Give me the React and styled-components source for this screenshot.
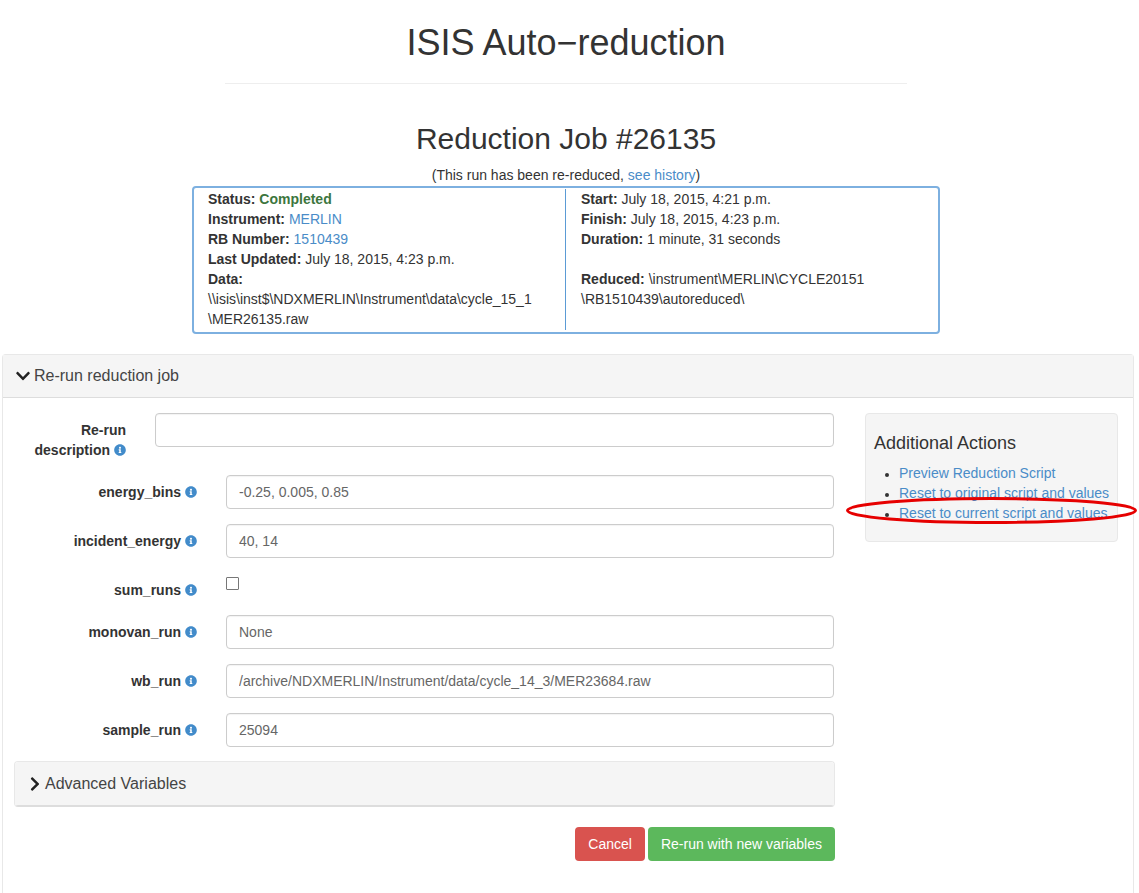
import React from "react";
import styled, { createGlobalStyle } from "styled-components";
import { FaChevronDown, FaChevronRight, FaInfoCircle } from "react-icons/fa";

const Global = createGlobalStyle`
    html, body {
        margin: 0;
        background: #fff;
        font-family: "Liberation Sans", Arial, sans-serif;
        font-size: 14px;
        line-height: 20px;
        color: #333;
    }
`;

const Page = styled.div`
    width: 1139px;
    height: 893px;
    overflow: hidden;
`;

const Header = styled.header`
    width: 682px;
    height: 83px;
    margin-left: 225px;
    border-bottom: 1px solid #eee;
    display: flex;
    justify-content: center;
`;

const Title = styled.h1`
    margin: 22px 0 0;
    font-size: 36px;
    line-height: 42px;
    font-weight: 400;
`;

const JobTitle = styled.h2`
    width: 1132px;
    margin: 38px 0 0;
    text-align: center;
    font-size: 30px;
    line-height: 34px;
    font-weight: 400;
`;

const Note = styled.p`
    width: 1132px;
    margin: 9px 0 1px;
    text-align: center;
`;

const Link = styled.a`
    color: #4a8cc8;
    text-decoration: none;
`;

const Summary = styled.section`
    box-sizing: border-box;
    width: 748px;
    height: 148px;
    margin-left: 192px;
    padding: 1px 0 2px;
    display: flex;
    border: 2px solid #7db0e0;
    border-radius: 4px;
`;

const SummaryCol = styled.div`
    box-sizing: border-box;
    width: ${(p) => p.$width}px;
    padding-left: ${(p) => p.$pad}px;
    border-right: ${(p) => (p.$divider ? "1px solid #5b9bd5" : "none")};
`;

const Line = styled.div`
    height: 20px;
    white-space: nowrap;
`;

const Done = styled.span`
    color: #3c763d;
    font-weight: 700;
`;

const Panel = styled.section`
    box-sizing: border-box;
    width: 1132px;
    height: 540px;
    margin: 20px 0 0 2px;
    border: 1px solid #e8e8e8;
    border-bottom: none;
    border-radius: 4px 4px 0 0;
`;

const PanelHeading = styled.div`
    box-sizing: border-box;
    height: ${(p) => p.$height}px;
    padding: 0 12px;
    display: flex;
    align-items: center;
    gap: ${(p) => p.$gap}px;
    background: #f5f5f5;
    border-bottom: 1px solid #ddd;
    font-size: 16px;
    color: #444;

    svg {
        color: #222;
        font-size: 16px;
    }
`;

const PanelBody = styled.div`
    display: flex;
    padding: 15px 15px 0 11px;
`;

const FormCol = styled.form`
    width: 821px;
    margin-right: 30px;
`;

const Row = styled.div`
    display: grid;
    grid-template-columns: ${(p) => p.$label}px 1fr;
    column-gap: 29px;
    margin-bottom: 15px;
`;

const Label = styled.label`
    padding-top: 7px;
    text-align: right;
    font-weight: 700;
`;

const Info = styled(FaInfoCircle)`
    margin-left: 4px;
    vertical-align: -1px;
    font-size: 12px;
    color: #428bca;
`;

const Input = styled.input`
    box-sizing: border-box;
    width: 100%;
    height: 34px;
    padding: 6px 12px;
    border: 1px solid #ccc;
    border-radius: 4px;
    background: #fff;
    font: inherit;
    color: #666;
    box-shadow: inset 0 1px 1px rgba(0, 0, 0, 0.05);
`;

const Check = styled.input`
    width: 13px;
    height: 13px;
    margin: 4px 0 0;
    appearance: none;
    border: 1px solid #777;
    border-radius: 1px;
    background: #fff;
`;

const Advanced = styled.div`
    margin: -1px -1px 0 0;
    border: 1px solid #e8e8e8;
    border-bottom: 1px solid #ddd;
    border-radius: 4px;
    overflow: hidden;
`;

const Buttons = styled.div`
    display: flex;
    justify-content: flex-end;
    gap: 3px;
    margin: 20px -1px 0 0;
`;

const Button = styled.button`
    height: 34px;
    padding: 0 13px;
    border: none;
    border-radius: 4px;
    background: ${(p) => p.$bg};
    color: #fff;
    font: inherit;
`;

const Sidebar = styled.aside`
    position: relative;
    box-sizing: border-box;
    width: 253px;
    height: 129px;
    margin-left: 1px;
    padding: 19px 8px 0;
    background: #f5f5f5;
    border: 1px solid #e8e8e8;
    border-radius: 4px;
`;

const SideTitle = styled.h4`
    margin: 0 0 10px;
    font-size: 18px;
    line-height: 20px;
    font-weight: 400;
`;

const ActionList = styled.ul`
    margin: 0;
    padding-left: 25px;
    white-space: nowrap;

    li::marker {
        font-size: 12px;
    }
`;

const Ring = styled.svg`
    position: absolute;
    left: -20px;
    top: 82px;
`;

const fields = [
    { name: "energy_bins", value: "-0.25, 0.005, 0.85" },
    { name: "incident_energy", value: "40, 14" },
    { name: "sum_runs", check: true },
    { name: "monovan_run", value: "None" },
    { name: "wb_run", value: "/archive/NDXMERLIN/Instrument/data/cycle_14_3/MER23684.raw" },
    { name: "sample_run", value: "25094" },
];

const actions = [
    "Preview Reduction Script",
    "Reset to original script and values",
    "Reset to current script and values",
];

const App = () => {
    return (
        <Page>
            <Global />
            <Header>
                <Title>ISIS Auto−reduction</Title>
            </Header>
            <JobTitle>Reduction Job #26135</JobTitle>
            <Note>
                (This run has been re-reduced, <Link href="#">see history</Link>)
            </Note>
            <Summary>
                <SummaryCol $width={372} $pad={14} $divider>
                    <Line><b>Status:</b> <Done>Completed</Done></Line>
                    <Line><b>Instrument:</b> <Link href="#">MERLIN</Link></Line>
                    <Line><b>RB Number:</b> <Link href="#">1510439</Link></Line>
                    <Line><b>Last Updated:</b> July 18, 2015, 4:23 p.m.</Line>
                    <Line><b>Data:</b></Line>
                    <Line>\\isis\inst$\NDXMERLIN\Instrument\data\cycle_15_1</Line>
                    <Line>\MER26135.raw</Line>
                </SummaryCol>
                <SummaryCol $width={370} $pad={15}>
                    <Line><b>Start:</b> July 18, 2015, 4:21 p.m.</Line>
                    <Line><b>Finish:</b> July 18, 2015, 4:23 p.m.</Line>
                    <Line><b>Duration:</b> 1 minute, 31 seconds</Line>
                    <Line />
                    <Line><b>Reduced:</b> \instrument\MERLIN\CYCLE20151</Line>
                    <Line>\RB1510439\autoreduced\</Line>
                </SummaryCol>
            </Summary>
            <Panel>
                <PanelHeading $gap={3} $height={43}>
                    <FaChevronDown />
                    Re-run reduction job
                </PanelHeading>
                <PanelBody>
                    <FormCol>
                        <Row $label={112}>
                            <Label>Re-run<br />description<Info /></Label>
                            <Input />
                        </Row>
                        {fields.map((f) => (
                            <Row $label={183} key={f.name}>
                                <Label>{f.name}<Info /></Label>
                                {f.check ? <div><Check type="checkbox" /></div> : <Input defaultValue={f.value} />}
                            </Row>
                        ))}
                        <Advanced>
                            <PanelHeading $gap={2} $height={44}>
                                <FaChevronRight />
                                Advanced Variables
                            </PanelHeading>
                        </Advanced>
                        <Buttons>
                            <Button type="button" $bg="#d9534f">Cancel</Button>
                            <Button type="button" $bg="#5cb85c">Re-run with new variables</Button>
                        </Buttons>
                    </FormCol>
                    <Sidebar>
                        <SideTitle>Additional Actions</SideTitle>
                        <ActionList>
                            {actions.map((a) => (
                                <li key={a}><Link href="#">{a}</Link></li>
                            ))}
                        </ActionList>
                        <Ring width="294" height="30" viewBox="0 0 294 30">
                            <ellipse cx="145.5" cy="14.5" rx="144" ry="12" fill="none" stroke="#e60000" strokeWidth="3" />
                        </Ring>
                    </Sidebar>
                </PanelBody>
            </Panel>
        </Page>
    );
};

export default App;
